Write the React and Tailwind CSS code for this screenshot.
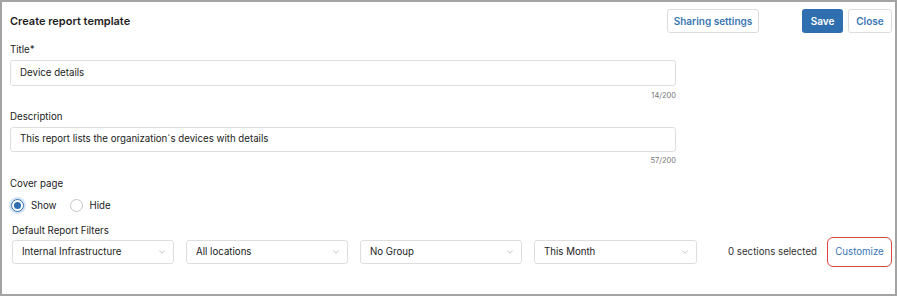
import { ChevronDown } from 'lucide-react'

function Select({ value, className = '' }) {
  return (
    <div className={`h-6 w-[162px] flex items-center justify-between pl-[9px] pr-[6px] border border-[#dedede] rounded-[3px] bg-white ${className}`}>
      <span className="text-[9.7px] text-[#222]">{value}</span>
      <ChevronDown size={10} strokeWidth={1.5} className="text-[#a0a0a0]" />
    </div>
  )
}

function Radio({ label, checked }) {
  return (
    <label className="flex items-center gap-[7px]">
      <span
        className={`w-[13px] h-[13px] rounded-full flex items-center justify-center ${
          checked ? 'border border-[#2f6fb0] ring-2 ring-[#d4e3f3]' : 'border border-[#c4c4c4]'
        }`}
      >
        {checked && <span className="w-[7px] h-[7px] rounded-full bg-[#2f6fb0]" />}
      </span>
      <span className="text-[9.7px] text-[#222]">{label}</span>
    </label>
  )
}

export default function App() {
  return (
    <div className="w-[898px] h-[297px] bg-white" style={{ fontFamily: 'Inter, "Noto Sans", sans-serif' }}>
      <div className="w-[897px] h-[296px] border-2 border-[#a3a3a3] pl-2 pr-[3px]">
        {/* Header */}
        <div className="mt-[7px] h-6 flex items-center justify-between">
          <h1 className="text-[11px] font-semibold text-[#1e1e1e]">Create report template</h1>
          <div className="flex items-center">
            <button className="h-6 w-[92px] border border-[#dcdcdc] rounded-[3px] text-[10px] font-semibold text-[#3a76b5] bg-white">
              Sharing settings
            </button>
            <button className="h-6 w-[41px] ml-[43px] rounded-[3px] bg-[#2f6fb0] text-[10px] font-semibold text-white">
              Save
            </button>
            <button className="h-6 w-[44px] ml-[5px] border border-[#dcdcdc] rounded-[3px] text-[10px] font-semibold text-[#3a76b5] bg-white">
              Close
            </button>
          </div>
        </div>

        {/* Title */}
        <div className="w-[666px]">
          <p className="mt-[10px] leading-[14px] text-[9.7px] text-[#222]">Title*</p>
          <div className="mt-[3px] h-[26px] border border-[#dedede] rounded-[3px] flex items-center px-[9px]">
            <span className="text-[9.7px] text-[#222]">Device details</span>
          </div>
          <p className="mt-[4px] leading-[12px] text-[7.5px] text-[#777] text-right">14/200</p>

          <p className="mt-[8px] leading-[14px] text-[9.7px] text-[#222]">Description</p>
          <div className="mt-[3px] h-[25px] border border-[#dedede] rounded-[3px] flex items-center px-[9px]">
            <span className="text-[9.7px] text-[#222]">This report lists the organization`s devices with details</span>
          </div>
          <p className="mt-[3px] leading-[12px] text-[7.5px] text-[#777] text-right">57/200</p>
        </div>

        {/* Cover page */}
        <p className="mt-[10px] leading-[14px] text-[9.7px] text-[#222]">Cover page</p>
        <div className="mt-[7px] h-4 flex items-center gap-[13px] pl-[1px]">
          <Radio label="Show" checked />
          <Radio label="Hide" />
        </div>

        {/* Filters */}
        <p className="mt-[10px] leading-[13px] text-[9.7px] text-[#222] pl-[2px]">Default Report Filters</p>
        <div className="h-[30px] flex items-center">
          <div className="flex items-center gap-3 ml-[2px]">
            <Select value="Internal Infrastructure" />
            <Select value="All locations" />
            <Select value="No Group" />
            <Select value="This Month" className="w-[163px]" />
          </div>
          <span className="ml-[31px] text-[9.7px] text-[#333]">0 sections selected</span>
          <button className="ml-auto h-[30px] w-[65px] border-[1.5px] border-[#d9463f] rounded-[6px] text-[9.7px] text-[#3a76b5]">
            Customize
          </button>
        </div>
      </div>
    </div>
  )
}
